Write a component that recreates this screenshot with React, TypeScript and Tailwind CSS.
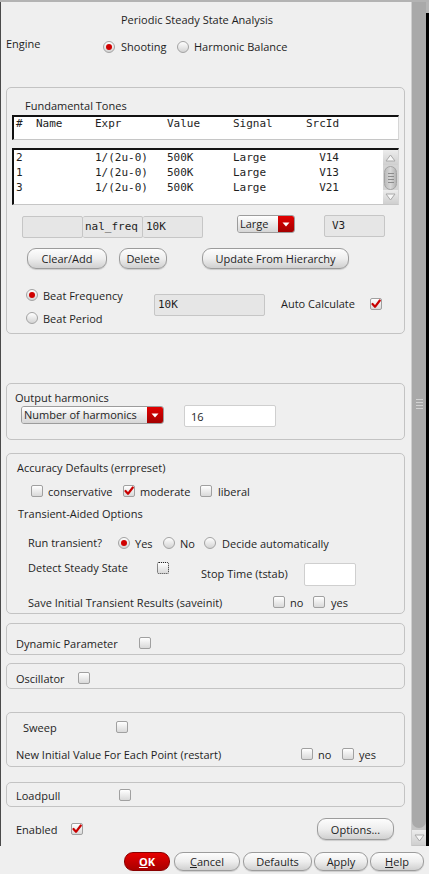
import React from "react";

const Radio = ({ on }: { on?: boolean }) => (
  <span className="w-[12px] h-[12px] shrink-0 rounded-full border border-[#a3a3a3] bg-linear-to-b from-[#ffffff] to-[#d3d3d3] flex items-center justify-center">
    {on && <span className="w-[6px] h-[6px] rounded-full bg-[#d00000]" />}
  </span>
);

const Check = ({ on, focus }: { on?: boolean; focus?: boolean }) => (
  <span
    className={`w-[12px] h-[12px] shrink-0 rounded-[2px] border bg-linear-to-b from-[#ffffff] to-[#d9d9d9] flex items-center justify-center ${
      focus ? "border-dotted border-[#222]" : "border-[#a0a0a0]"
    }`}
  >
    {on && (
      <svg width="10" height="10" viewBox="0 0 10 10">
        <path d="M1.5 5 L4 7.8 L8.8 1.5" fill="none" stroke="#c80000" strokeWidth="2.2" strokeLinecap="round" strokeLinejoin="round" />
      </svg>
    )}
  </span>
);

const Btn = ({ className, children }: { className?: string; children: React.ReactNode }) => (
  <div
    className={`flex items-center justify-center rounded-[9px] border border-[#9c9c9c] bg-linear-to-b from-[#fdfdfd] via-[#eeeeee] to-[#d0d0d0] shadow-[0_1px_1px_rgba(0,0,0,0.15)] ${className}`}
  >
    {children}
  </div>
);

const Group = ({ className, children }: { className?: string; children: React.ReactNode }) => (
  <div className={`ml-[5px] w-[399px] rounded-[5px] border border-[#c3c3c3] ${className}`}>{children}</div>
);

const Combo = ({ label, className }: { label: string; className?: string }) => (
  <div className={`flex h-[18px] rounded-[3px] border border-[#9c9c9c] overflow-hidden ${className}`}>
    <div className="flex-1 pl-[2px] leading-[16px] bg-linear-to-b from-[#ffffff] to-[#d6d6d6]">{label}</div>
    <div className="w-[16px] flex items-center justify-center bg-linear-to-b from-[#e20000] to-[#a40000]">
      <svg width="8" height="5" viewBox="0 0 8 5">
        <path d="M0.5 0.5 L7.5 0.5 L4 4.5 Z" fill="#fff" />
      </svg>
    </div>
  </div>
);

const Field = ({ className, children }: { className?: string; children?: React.ReactNode }) => (
  <div className={`h-[22px] rounded-[2px] border border-[#c6c6c6] bg-[#e6e6e6] font-['DejaVu_Sans_Mono',monospace] leading-[20px] ${className}`}>
    {children}
  </div>
);

const ArrowBox = ({ up, className }: { up?: boolean; className?: string }) => (
  <div className={`flex items-center justify-center bg-linear-to-b from-[#ececec] to-[#cfcfcf] ${className}`}>
    <svg width="11" height="8" viewBox="0 0 11 8">
      <path d={up ? "M1 7 L5.5 1 L10 7 Z" : "M1 1 L10 1 L5.5 7 Z"} fill="#f6f6f6" stroke="#a8a8a8" strokeWidth="1" />
    </svg>
  </div>
);

const rows = [
  ["2", "V14"],
  ["1", "V13"],
  ["3", "V21"],
];

export default function App() {
  return (
    <div className="w-[429px] h-[874px] overflow-hidden bg-[#efefef] text-[11px] leading-[15px] text-[#1e1e1e] font-['Open_Sans',sans-serif] flex flex-col">
      <div className="flex h-[846px] border-t-2 border-[#b3b3b3]">
        <div className="w-[412px] border-l border-r border-l-[#4a4a4a] border-r-[#cfcfcf] flex flex-col">
          <div className="mt-[10px] w-[392px] h-[15px] text-center">Periodic Steady State Analysis</div>

          <div className="mt-[8px] h-[20px] pl-[5px] flex items-start">
            <div className="w-[97px] mt-[1px]">Engine</div>
            <div className="mt-[4px] flex items-center h-[15px]">
              <div className="w-[74px] flex items-center gap-[6px]">
                <Radio on />
                <span>Shooting</span>
              </div>
              <div className="flex items-center gap-[5px]">
                <Radio />
                <span>Harmonic Balance</span>
              </div>
            </div>
          </div>

          {/* Fundamental tones */}
          <Group className="mt-[32px] pb-[7px]">
            <div className="mt-[10px] pl-[18px] h-[15px]">Fundamental Tones</div>
            <div className="mt-[2px] ml-[5px] w-[387px] h-[25px] bg-white border-t-2 border-l-2 border-r border-b border-t-[#111] border-l-[#111] border-r-[#d6d6d6] border-b-[#c6c6c6] font-['DejaVu_Sans_Mono',monospace] leading-[14px]">
              <div className="flex pl-[2px]">
                <span className="w-[20px]">#</span>
                <span className="w-[59px]">Name</span>
                <span className="w-[72px]">Expr</span>
                <span className="w-[66px]">Value</span>
                <span className="w-[73px]">Signal</span>
                <span className="w-[33px]">SrcId</span>
              </div>
            </div>
            <div className="mt-[8px] ml-[5px] w-[387px] h-[57px] bg-white border-t-2 border-l-2 border-r border-b border-t-[#111] border-l-[#111] border-r-[#d6d6d6] border-b-[#c6c6c6] flex">
              <div className="flex-1 font-['DejaVu_Sans_Mono',monospace]">
                {rows.map(([n, id]) => (
                  <div key={n} className="flex pl-[2px] h-[15px] leading-[15px]">
                    <span className="w-[20px]">{n}</span>
                    <span className="w-[59px]" />
                    <span className="w-[72px]">1/(2u-0)</span>
                    <span className="w-[66px]">500K</span>
                    <span className="w-[73px]">Large</span>
                    <span className="w-[33px] text-right">{id}</span>
                  </div>
                ))}
              </div>
              <div className="w-[15px] flex flex-col bg-[#d4d4d4]">
                <ArrowBox up className="h-[15px]" />
                <div className="h-[25px] flex items-center justify-center">
                  <div className="w-[13px] h-[24px] rounded-full bg-linear-to-r from-[#bcbcbc] via-[#d8d8d8] to-[#b4b4b4] border border-[#a4a4a4] flex flex-col items-center justify-center gap-[2px]">
                    <span className="w-[6px] h-px bg-[#8c8c8c]" />
                    <span className="w-[6px] h-px bg-[#8c8c8c]" />
                    <span className="w-[6px] h-px bg-[#8c8c8c]" />
                    <span className="w-[6px] h-px bg-[#8c8c8c]" />
                  </div>
                </div>
                <ArrowBox className="flex-1" />
              </div>
            </div>

            <div className="mt-[10px] h-[22px] flex items-start pl-[15px]">
              <Field className="mt-[1px] h-[21px] w-[61px]" />
              <Field className="mt-[1px] h-[21px] w-[60px] border-l-0 pl-[2px]">nal_freq</Field>
              <Field className="mt-[1px] h-[21px] w-[60px] border-l-0 pl-[3px]">10K</Field>
              <Combo label="Large" className="ml-[34px] w-[58px]" />
              <Field className="ml-[29px] w-[61px] pl-[7px]">V3</Field>
            </div>

            <div className="mt-[11px] h-[21px] flex pl-[20px]">
              <Btn className="w-[80px] h-[21px]">Clear/Add</Btn>
              <Btn className="ml-[12px] w-[48px] h-[21px]">Delete</Btn>
              <Btn className="ml-[35px] w-[147px] h-[21px]">Update From Hierarchy</Btn>
            </div>

            <div className="mt-[18px] h-[39px] flex items-start pl-[19px]">
              <div className="w-[128px] flex flex-col gap-[7px]">
                <div className="h-[16px] flex items-center gap-[5px]">
                  <Radio on />
                  <span>Beat Frequency</span>
                </div>
                <div className="h-[16px] flex items-center gap-[5px]">
                  <Radio />
                  <span>Beat Period</span>
                </div>
              </div>
              <Field className="mt-[7px] w-[111px] pl-[3px]">10K</Field>
              <div className="ml-[16px] mt-[9px] w-[89px]">Auto Calculate</div>
              <div className="mt-[11px]">
                <Check on />
              </div>
            </div>
          </Group>

          {/* Output harmonics */}
          <Group className="mt-[49px] pb-[11px]">
            <div className="mt-[6px] pl-[8px] h-[15px]">Output harmonics</div>
            <div className="h-[23px] flex items-start pl-[14px]">
              <Combo label="Number of harmonics" className="mt-[1px] w-[143px]" />
              <div className="ml-[20px] w-[92px] h-[22px] rounded-[2px] border border-[#cfcfcf] bg-white pl-[6px] leading-[21px]">16</div>
            </div>
          </Group>

          {/* Accuracy */}
          <Group className="mt-[13px] pb-[3px]">
            <div className="mt-[6px] pl-[10px] h-[15px]">Accuracy Defaults (errpreset)</div>
            <div className="mt-[8px] h-[16px] flex items-center pl-[24px]">
              <div className="w-[92px] flex items-center gap-[5px]">
                <Check />
                <span>conservative</span>
              </div>
              <div className="w-[77px] flex items-center gap-[5px]">
                <Check on />
                <span>moderate</span>
              </div>
              <div className="flex items-center gap-[6px]">
                <Check />
                <span>liberal</span>
              </div>
            </div>
            <div className="mt-[7px] pl-[11px] h-[15px]">Transient-Aided Options</div>
            <div className="mt-[14px] h-[16px] flex items-center pl-[21px]">
              <div className="w-[90px] -mt-[1px]">Run transient?</div>
              <div className="w-[45px] flex items-center gap-[5px]">
                <Radio on />
                <span>Yes</span>
              </div>
              <div className="w-[41px] flex items-center gap-[5px]">
                <Radio />
                <span>No</span>
              </div>
              <div className="flex items-center gap-[6px]">
                <Radio />
                <span>Decide automatically</span>
              </div>
            </div>
            <div className="mt-[9px] h-[27px] flex items-start pl-[21px]">
              <div className="w-[129px] h-[16px] leading-[16px]">Detect Steady State</div>
              <div className="mt-[2px]">
                <Check focus />
              </div>
              <div className="ml-[32px] mt-[6px] w-[103px]">Stop Time (tstab)</div>
              <div className="mt-[3px] w-[52px] h-[23px] rounded-[2px] border border-[#cfcfcf] bg-white" />
            </div>
            <div className="mt-[7px] h-[16px] flex items-center pl-[21px]">
              <div className="w-[245px]">Save Initial Transient Results (saveinit)</div>
              <div className="w-[40px] flex items-center gap-[5px]">
                <Check />
                <span>no</span>
              </div>
              <div className="flex items-center gap-[6px]">
                <Check />
                <span>yes</span>
              </div>
            </div>
          </Group>

          {/* Dynamic parameter */}
          <Group className="mt-[9px] pt-[8px]">
            <div className="h-[22px] flex items-center pl-[9px]">
              <div className="w-[123px]">Dynamic Parameter</div>
              <Check />
            </div>
          </Group>

          {/* Oscillator */}
          <Group className="mt-[8px] pt-[4px]">
            <div className="h-[20px] flex items-center pl-[9px]">
              <div className="w-[62px]">Oscillator</div>
              <Check />
            </div>
          </Group>

          {/* Sweep */}
          <Group className="mt-[23px] pt-[6px] pb-[4px]">
            <div className="h-[16px] flex items-center pl-[16px]">
              <div className="w-[93px]">Sweep</div>
              <Check />
            </div>
            <div className="mt-[11px] h-[16px] flex items-center pl-[9px]">
              <div className="w-[285px]">New Initial Value For Each Point (restart)</div>
              <div className="w-[41px] flex items-center gap-[5px]">
                <Check />
                <span>no</span>
              </div>
              <div className="flex items-center gap-[5px]">
                <Check />
                <span>yes</span>
              </div>
            </div>
          </Group>

          {/* Loadpull */}
          <Group className="mt-[15px] pt-[4px] pb-[3px]">
            <div className="h-[16px] flex items-center pl-[9px]">
              <div className="w-[103px]">Loadpull</div>
              <Check />
            </div>
          </Group>

          <div className="mt-[11px] h-[22px] flex items-center pl-[15px]">
            <div className="w-[55px]">Enabled</div>
            <Check on />
            <Btn className="ml-[234px] w-[77px] h-[22px]">Options...</Btn>
          </div>
        </div>

        {/* window scrollbar */}
        <div className="w-[14px] flex flex-col bg-[#c4c4c4]">
          <div className="flex-1 rounded-b-[7px] bg-[#a9a9a9] flex flex-col items-center pt-[397px] gap-[2px]">
            <span className="w-[7px] h-px bg-[#d2d2d2]" />
            <span className="w-[7px] h-px bg-[#d2d2d2]" />
            <span className="w-[7px] h-px bg-[#d2d2d2]" />
            <span className="w-[7px] h-px bg-[#d2d2d2]" />
          </div>
          <ArrowBox className="mt-[2px] mb-[1px] h-[15px]" />
        </div>
        <div className="w-[3px] flex flex-col">
          <div className="h-[11px] bg-[#b5b5b5]" />
          <div className="flex-1 bg-black" />
        </div>
      </div>

      {/* dialog buttons */}
      <div className="flex-1 flex justify-end items-start pt-[6px] pr-[5px]">
        <div className="w-[46px] h-[19px] rounded-[9px] border border-[#8a0000] bg-linear-to-b from-[#e60000] to-[#a80000] text-white font-bold flex items-center justify-center">
          <span>
            <span className="underline">O</span>K
          </span>
        </div>
        <Btn className="ml-[4px] w-[66px] h-[19px]">
          <span>
            <span className="underline">C</span>ancel
          </span>
        </Btn>
        <Btn className="ml-[3px] w-[69px] h-[19px]">Defaults</Btn>
        <Btn className="ml-[2px] w-[54px] h-[19px]">Apply</Btn>
        <Btn className="ml-[2px] w-[54px] h-[19px]">
          <span>
            <span className="underline">H</span>elp
          </span>
        </Btn>
      </div>
    </div>
  );
}
